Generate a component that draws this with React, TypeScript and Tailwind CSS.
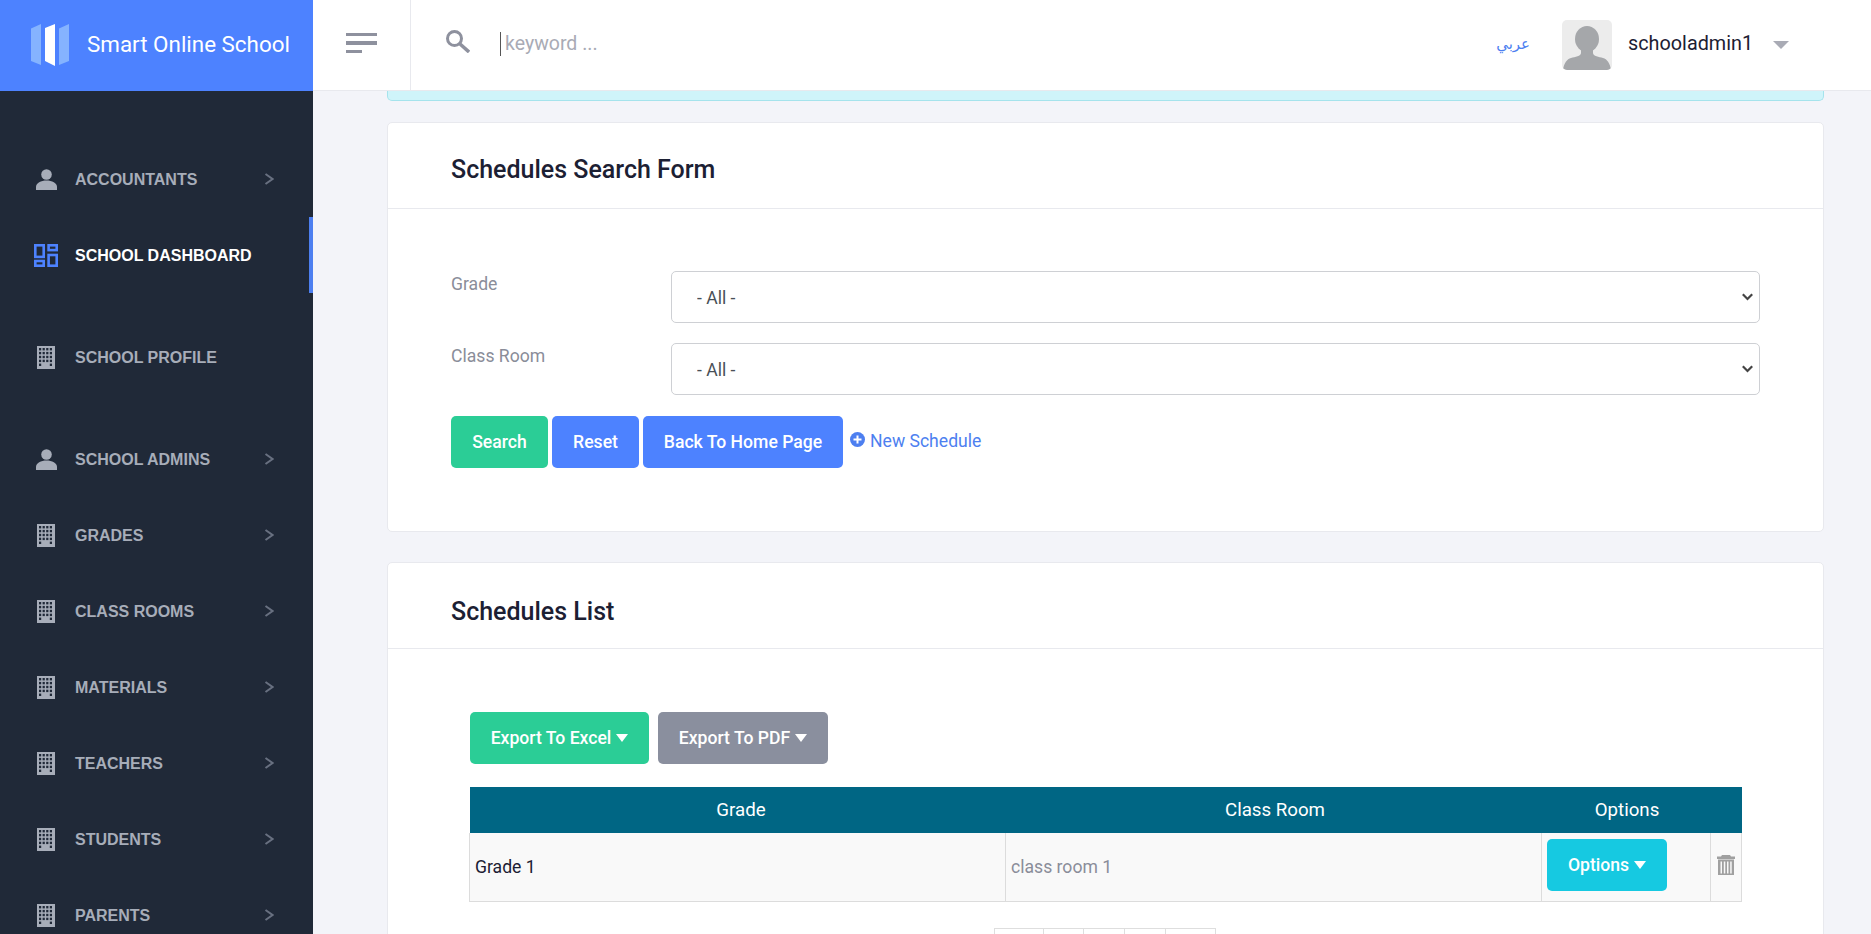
function PersonIcon() {
  return (
    <svg width="21" height="21" viewBox="0 0 21 21" className="fill-[#a7adb9]">
      <circle cx="10.5" cy="5.5" r="5.3" />
      <path d="M0 21v-3c0-4 5-6.5 10.5-6.5S21 14 21 18v3z" />
    </svg>
  )
}

function BuildingIcon() {
  const holes = []
  for (let r = 0; r < 5; r++) {
    for (let c = 0; c < 4; c++) {
      if (r === 4 && (c === 1 || c === 2)) continue
      holes.push(<rect key={`${r}-${c}`} x={2 + c * 3.6} y={2 + r * 3.9} width="2.2" height="2.4" fill="#202938" />)
    }
  }
  return (
    <svg width="18" height="23" viewBox="0 0 18 23" className="ml-[1px]">
      <rect width="18" height="23" fill="#a7adb9" />
      {holes}
    </svg>
  )
}

function DashboardIcon() {
  return (
    <svg width="24" height="23" viewBox="0 0 24 23" fill="none" stroke="#4d82ff" strokeWidth="2.6" className="ml-[-2px]">
      <rect x="1.3" y="1.3" width="8.4" height="11.6" />
      <rect x="14.6" y="1.3" width="8.1" height="4.8" />
      <rect x="14.6" y="11" width="8.1" height="10.7" />
      <rect x="1.3" y="17" width="8.4" height="4.7" />
    </svg>
  )
}

function Chevron() {
  return (
    <svg width="10" height="12" viewBox="0 0 10 12" fill="none" stroke="#687080" strokeWidth="2">
      <path d="M1.5 1 L8.5 6 L1.5 11" />
    </svg>
  )
}

function SideItem({ label, icon, arrow = true, active = false, mt = "" }: { label: string; icon: React.ReactNode; arrow?: boolean; active?: boolean; mt?: string }) {
  return (
    <div className={`flex h-[76px] items-center pl-[34px] pr-[35px] border-r-4 ${active ? "border-[#4d7ff0] text-white" : "border-transparent text-[#a7adb9]"} ${mt}`}>
      <div className="flex w-[41px] shrink-0 items-center pl-[2px]">{icon}</div>
      <span className="flex-1 pt-[1px] font-['Liberation_Sans',sans-serif] text-[16px] font-bold whitespace-nowrap">{label}</span>
      {arrow && <Chevron />}
    </div>
  )
}

function Caret() {
  return <span className="ml-[5px] inline-block h-0 w-0 border-x-[6px] border-t-[8px] border-x-transparent border-t-white" />
}

function Btn({ children, className }: { children: React.ReactNode; className: string }) {
  return <button className={`flex h-[52px] items-center justify-center rounded-[5px] text-[17.6px] font-medium text-white ${className}`}>{children}</button>
}

function Card({ title, titleTop, children }: { title: string; titleTop: string; children: React.ReactNode }) {
  return (
    <div className="rounded-[5px] border border-[#e8e9ee] bg-white">
      <div className={`flex h-[86px] items-center border-b border-[#e8e9ee] pl-[63px] text-[25px] font-medium text-[#1c2033] ${titleTop}`}>{title}</div>
      {children}
    </div>
  )
}

function SelectBox() {
  return (
    <div className="relative h-[52px]">
      <select className="h-full w-full appearance-none rounded-[5px] border border-[#ced0d4] bg-white pl-[25px] pt-[2px] text-[17.6px] text-[#495057]">
        <option>- All -</option>
      </select>
      <svg width="11" height="8" viewBox="0 0 11 8" fill="none" stroke="#444444" strokeWidth="2.2" className="pointer-events-none absolute right-[7px] top-[22px]">
        <path d="M0.8 1.2 L5.5 6 L10.2 1.2" />
      </svg>
    </div>
  )
}

export default function App() {
  return (
    <div className="flex h-[934px] w-[1871px] flex-col overflow-hidden bg-[#f3f4f9] font-['Roboto',sans-serif]">
      <header className="flex h-[91px] shrink-0 border-b border-[#e8e9ee] bg-white">
        <div className="-mb-px flex w-[313px] shrink-0 items-center bg-[#4d82ff] pb-[2px] pl-[31px]">
          <svg width="38" height="42" viewBox="0 0 38 42">
            <path d="M0 4.6 L10 0 V41 L0 37Z" fill="#85b3ff" />
            <path d="M14 4 L24 0 V42 L14 37Z" fill="#ffffff" />
            <path d="M28 4.5 L38 0 V37 L28 41Z" fill="#85b3ff" />
          </svg>
          <span className="ml-[18px] text-[22.4px] whitespace-nowrap text-white">Smart Online School</span>
        </div>
        <div className="flex w-[98px] shrink-0 flex-col justify-center gap-[5px] border-r border-[#e8e9ee] pb-[4px] pl-[33px]">
          <span className="h-[3.5px] w-[31px] bg-[#8e919e]" />
          <span className="h-[3.5px] w-[31px] bg-[#8e919e]" />
          <span className="h-[3.5px] w-[16px] bg-[#8e919e]" />
        </div>
        <div className="flex flex-1 items-center pb-[2px] pl-[35px]">
          <svg width="24" height="23" viewBox="0 0 24 23" fill="none" stroke="#8e919e" className="mb-[6px]">
            <circle cx="8.5" cy="8.5" r="7" strokeWidth="3" />
            <path d="M13.5 13.5 L23 22" strokeWidth="3.5" />
          </svg>
          <div className="ml-[30px] h-[24px] w-px bg-[#555]" />
          <span className="ml-[4px] text-[19.5px] text-[#a9abb5]">keyword ...</span>
        </div>
        <div className="flex items-center pr-[82px]">
          <span className="pb-[2px] font-['DejaVu_Sans',sans-serif] text-[15px] text-[#4d7ff0]">عربي</span>
          <div className="ml-[32px] h-[50px] w-[50px] overflow-hidden rounded-[5px] bg-[#ececec]">
            <svg width="50" height="50" viewBox="0 0 50 50" className="fill-[#a5a7aa]">
              <ellipse cx="25" cy="19" rx="12" ry="13" />
              <path d="M19 28h12v5c0 3 6 4 10 5c4 1 7 5 8 12H1c1-7 4-11 8-12c4-1 10-2 10-5z" />
            </svg>
          </div>
          <span className="ml-[16px] pb-[2px] text-[19.8px] text-[#1c2033]">schooladmin1</span>
          <span className="ml-[20px] h-0 w-0 border-x-[8px] border-t-[8px] border-x-transparent border-t-[#a9abb5]" />
        </div>
      </header>

      <div className="flex min-h-0 flex-1">
        <aside className="w-[313px] shrink-0 bg-[#202938] pt-[50px]">
          <SideItem label="ACCOUNTANTS" icon={<PersonIcon />} />
          <SideItem label="SCHOOL DASHBOARD" icon={<DashboardIcon />} arrow={false} active />
          <SideItem label="SCHOOL PROFILE" icon={<BuildingIcon />} arrow={false} mt="mt-[26px]" />
          <SideItem label="SCHOOL ADMINS" icon={<PersonIcon />} mt="mt-[26px]" />
          <SideItem label="GRADES" icon={<BuildingIcon />} />
          <SideItem label="CLASS ROOMS" icon={<BuildingIcon />} />
          <SideItem label="MATERIALS" icon={<BuildingIcon />} />
          <SideItem label="TEACHERS" icon={<BuildingIcon />} />
          <SideItem label="STUDENTS" icon={<BuildingIcon />} />
          <SideItem label="PARENTS" icon={<BuildingIcon />} />
        </aside>

        <main className="min-w-0 flex-1 overflow-hidden pl-[74px] pr-[47px]">
          <div className="h-[10px] rounded-b-[5px] border border-t-0 border-[#a5e3ec] bg-[#cff4fa]" />

          <div className="mt-[21px]">
            <Card title="Schedules Search Form" titleTop="pt-[9px]">
              <div className="pl-[63px] pr-[63px] pt-[62px] pb-[63px]">
                <div className="grid grid-cols-[220px_1fr] gap-y-[20px] text-[17.6px] text-[#8a8d99]">
                  <label>Grade</label>
                  <SelectBox />
                  <label>Class Room</label>
                  <SelectBox />
                </div>
                <div className="mt-[21px] flex gap-[4px]">
                  <Btn className="w-[97px] bg-[#2bcd96]">Search</Btn>
                  <Btn className="w-[87px] bg-[#4d82ff]">Reset</Btn>
                  <Btn className="w-[200px] bg-[#4d82ff]">Back To Home Page</Btn>
                  <a className="ml-[3px] flex h-[50px] items-center text-[17.6px] text-[#4d7ff0]">
                    <svg width="15" height="15" viewBox="0 0 15 15" className="mr-[5px] mb-[4px]">
                      <circle cx="7.5" cy="7.5" r="7.5" fill="#4d7ff0" />
                      <path d="M7.5 3.5v8M3.5 7.5h8" stroke="#fff" strokeWidth="2" />
                    </svg>
                    New Schedule
                  </a>
                </div>
              </div>
            </Card>
          </div>

          <div className="mt-[30px]">
            <Card title="Schedules List" titleTop="pt-[12px]">
              <div className="pl-[82px] pr-[81px] pt-[63px]">
                <div className="flex gap-[9px]">
                  <Btn className="w-[179px] bg-[#2bcd96]">Export To Excel<Caret /></Btn>
                  <Btn className="w-[170px] bg-[#8a8f9e]">Export To PDF<Caret /></Btn>
                </div>
                <table className="mt-[23px] -ml-px w-[1272px] table-fixed border-collapse text-[17.6px]">
                  <colgroup>
                    <col className="w-[536px]" />
                    <col className="w-[536px]" />
                    <col className="w-[169px]" />
                    <col className="w-[31px]" />
                  </colgroup>
                  <thead>
                    <tr className="h-[46px] bg-[#006684] text-[18.7px] text-white">
                      <th className="pl-[7px] font-normal">Grade</th>
                      <th className="pl-[3px] font-normal">Class Room</th>
                      <th className="pl-[2px] font-normal">Options</th>
                      <th />
                    </tr>
                  </thead>
                  <tbody>
                    <tr className="h-[68px] bg-[#f9f9f9]">
                      <td className="border border-t-0 border-[#dcdcdc] pl-[5px] text-[#1c2033]">Grade 1</td>
                      <td className="border border-t-0 border-[#dcdcdc] pl-[5px] text-[#8a8d99]">class room 1</td>
                      <td className="border border-t-0 border-[#dcdcdc] pl-[5px] pt-[6px] align-top">
                        <Btn className="w-[120px] bg-[#16c9e1]">Options<Caret /></Btn>
                      </td>
                      <td className="border border-t-0 border-[#dcdcdc] pl-[6px]">
                        <svg width="18" height="20" viewBox="0 0 18 20" fill="#a0a0a0" className="mb-[4px]">
                          <path d="M5 0h8l1 1.5h4V4H0V1.5h4z" />
                          <path d="M1 4.5h16V20H1zM3.5 6.5v12h1.5v-12zM6.8 6.5v12h1.5v-12zM10 6.5v12h1.5v-12zM13.2 6.5v12h1.5v-12z" fillRule="evenodd" />
                        </svg>
                      </td>
                    </tr>
                  </tbody>
                </table>
                <div className="mt-[26px] flex h-[40px] justify-center pr-[3px]">
                  <div className="flex w-[222px] border border-[#dedede]">
                    <div className="w-[49px] border-r border-[#dedede]" />
                    <div className="w-[40px] border-r border-[#dedede]" />
                    <div className="w-[41px] border-r border-[#dedede]" />
                    <div className="w-[41px] border-r border-[#dedede]" />
                    <div className="flex-1" />
                  </div>
                </div>
              </div>
            </Card>
          </div>
        </main>
      </div>
    </div>
  )
}
